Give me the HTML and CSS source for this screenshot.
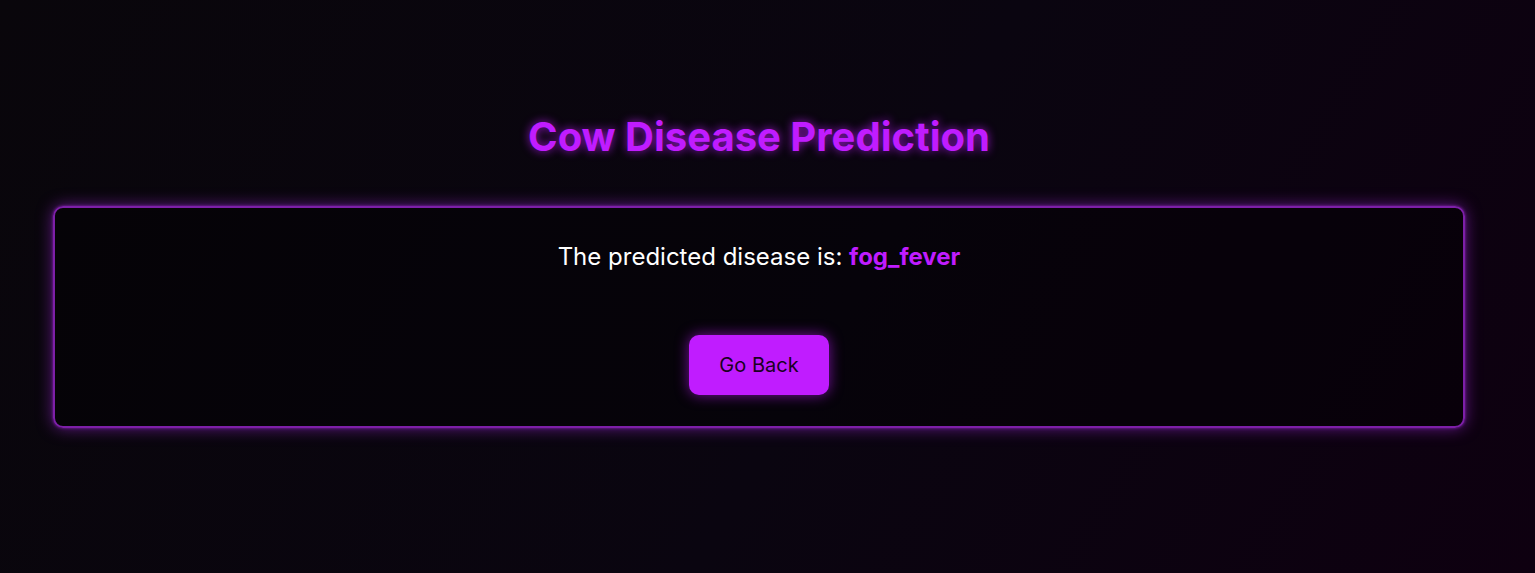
FILE: index.html
```html
<!DOCTYPE html>
<html lang="en">
<head>
<meta charset="utf-8">
<title>Cow Disease Prediction</title>
<link rel="stylesheet" href="styles.css">
</head>
<body>
<div class="page">
  <h1 class="title">Cow Disease Prediction</h1>
  <div class="card">
    <p class="result">The predicted disease is: <strong class="disease">fog_fever</strong></p>
    <a class="btn" href="#">Go Back</a>
  </div>
</div>
</body>
</html>
```

FILE: styles.css
```css
html, body {
  margin: 0;
  height: 100%;
}
body {
  font-family: "Inter", "Liberation Sans", sans-serif;
  background: linear-gradient(120deg, #09060b 0%, #0a0510 55%, #0e0010 100%);
  color: #fff;
}
.page {
  padding: 111px 70px 0 53px;
  display: flex;
  flex-direction: column;
  align-items: stretch;
}
.title {
  margin: 0;
  text-align: center;
  font-size: 40px;
  font-weight: 700;
  line-height: 52px;
  color: #c01cff;
  text-shadow: 0 0 10px rgba(192, 28, 255, 0.75);
}
.card {
  margin-top: 43px;
  border: 2px solid #7d1fa8;
  border-radius: 10px;
  background: rgba(0, 0, 0, 0.35);
  box-shadow: 0 0 3px rgba(150, 40, 200, 0.8), 0 0 16px rgba(160, 40, 220, 0.6);
  display: flex;
  flex-direction: column;
  align-items: center;
  padding: 31px 0 31px;
}
.result {
  margin: 0;
  font-size: 24px;
  line-height: 36px;
  color: #fff;
}
.disease {
  color: #c01cff;
  font-weight: 700;
}
.btn {
  margin-top: 60px;
  width: 140px;
  height: 60px;
  box-sizing: border-box;
  display: flex;
  align-items: center;
  justify-content: center;
  background: #c01cff;
  color: #1a0022;
  text-decoration: none;
  font-size: 20px;
  border-radius: 10px;
  box-shadow: 0 0 14px rgba(192, 28, 255, 0.6);
}
```
